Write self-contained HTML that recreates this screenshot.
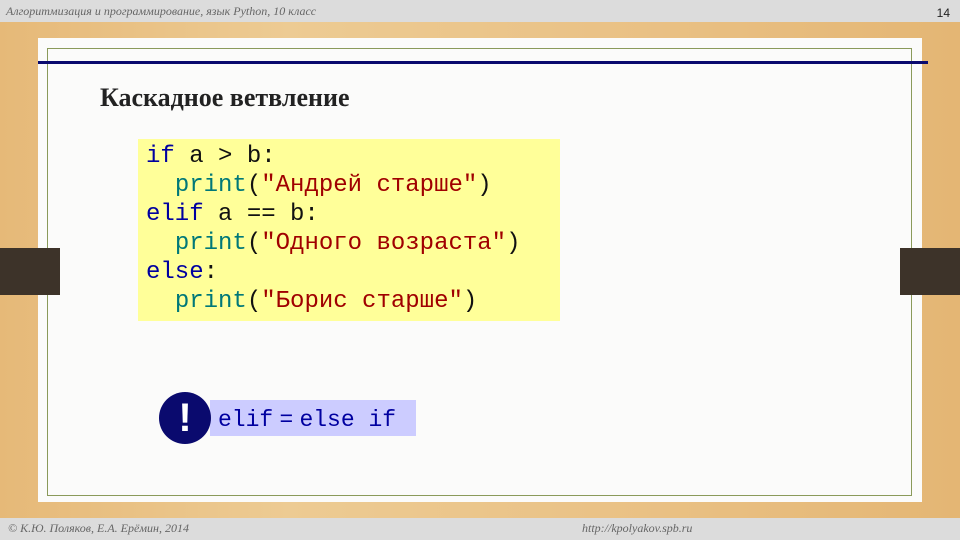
<!DOCTYPE html>
<html><head><meta charset="utf-8"><style>
body{margin:0;width:960px;height:540px;position:relative;overflow:hidden;background:#e8c48a;font-family:"Liberation Sans",sans-serif}
.top{position:absolute;left:0;top:0;width:960px;height:22px;background:#dcdcdc}
.bot{position:absolute;left:0;top:518px;width:960px;height:22px;background:#dcdcdc}
.wood{position:absolute;left:0;top:22px;width:960px;height:496px;background:linear-gradient(90deg,#e6b978,#edcb93 30%,#e9c083 70%,#e4b674)}
.panel{position:absolute;left:38px;top:38px;width:884px;height:464px;background:#fbfbfa}
.inner{position:absolute;left:47px;top:48px;width:863px;height:446px;border:1px solid #8a9a5a}
.line{position:absolute;left:38px;top:61px;width:890px;height:3px;background:#0a0a6e}
.tab{position:absolute;top:248px;height:47px;width:60px;background:#3d3329}
.t1{position:absolute;left:6px;top:4px;font-family:"Liberation Serif",serif;font-style:italic;font-size:12px;color:#666}
.pn{position:absolute;right:10px;top:6px;font-size:12px;color:#222}
h1{position:absolute;left:100px;top:83px;margin:0;font-family:"Liberation Serif",serif;font-weight:bold;font-size:26px;color:#222}
.code{position:absolute;left:138px;top:139px;width:414px;height:179px;background:#ffff99;padding:3px 0 0 8px;font-family:"Liberation Mono",monospace;font-size:24px;line-height:29px;white-space:pre;color:#111}
.k{color:#0000a0}.p{color:#007878}.s{color:#a00000}
.note{position:absolute;left:210px;top:400px;width:206px;height:36px;background:#ccccff;font-family:"Liberation Mono",monospace;font-size:23px;line-height:36px;color:#0000a0;padding-left:8px;box-sizing:border-box;white-space:pre}
.circ{position:absolute;left:159px;top:392px;width:52px;height:52px;border-radius:50%;background:#0a0a6e;color:#fff;font-family:"Liberation Sans",sans-serif;font-weight:bold;font-size:40px;line-height:52px;text-align:center}
.f1{position:absolute;left:8px;top:521px;font-family:"Liberation Serif",serif;font-style:italic;font-size:12px;color:#666}
.f2{position:absolute;left:582px;top:521px;font-family:"Liberation Serif",serif;font-style:italic;font-size:12px;color:#666}
</style></head><body>
<div class="top"></div><div class="wood"></div><div class="bot"></div>
<div class="t1">Алгоритмизация и программирование, язык Python, 10 класс</div>
<div class="pn">14</div>
<div class="panel"></div><div class="inner"></div><div class="line"></div>
<div class="tab" style="left:0"></div><div class="tab" style="left:900px"></div>
<h1>Каскадное ветвление</h1>
<div class="code"><span class="k">if</span> a &gt; b:
  <span class="p">print</span>(<span class="s">"Андрей старше"</span>)
<span class="k">elif</span> a == b:
  <span class="p">print</span>(<span class="s">"Одного возраста"</span>)
<span class="k">else</span>:
  <span class="p">print</span>(<span class="s">"Борис старше"</span>)</div>
<div class="note">elif<span style="font-family:'Liberation Sans',sans-serif"> = </span>else if</div>
<div class="circ">!</div>
<div class="f1">© К.Ю. Поляков, Е.А. Ерёмин, 2014</div>
<div class="f2">http://kpolyakov.spb.ru</div>
</body></html>
